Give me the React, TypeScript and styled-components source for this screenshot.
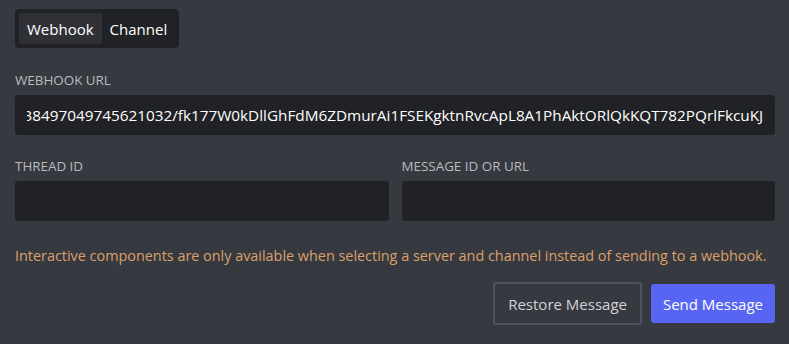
import React, { useEffect, useRef } from 'react';
import styled, { createGlobalStyle } from 'styled-components';

const GlobalStyle = createGlobalStyle`
  html, body {
    margin: 0;
    background: #36393f;
    font-family: "Open Sans", "Noto Sans", sans-serif;
  }
  * { box-sizing: border-box; }
`;

const Page = styled.div`
  padding: 9px 14px 0 15px;
  display: flex;
  flex-direction: column;
`;

const TabBar = styled.div`
  align-self: flex-start;
  display: flex;
  padding: 4px;
  background: #202225;
  border-radius: 4px;
  height: 39px;
`;

const Tab = styled.button<{ $active?: boolean }>`
  border: none;
  font: inherit;
  font-size: 15px;
  color: #ffffff;
  background: ${(p) => (p.$active ? '#2f3136' : 'transparent')};
  border-radius: 3px;
  padding: 0 8px;
  height: 31px;
  cursor: pointer;
`;

const Field = styled.div`
  display: flex;
  flex-direction: column;
  flex: 1;
  min-width: 0;
`;

const Label = styled.label`
  font-size: 13.4px;
  color: #b9bbbe;
  text-transform: uppercase;
  line-height: 18px;
  margin-bottom: 6px;
`;

const Input = styled.input`
  height: 40px;
  width: 100%;
  background: #202225;
  border: none;
  border-radius: 3px;
  color: #ffffff;
  font: inherit;
  font-size: 15.3px;
  padding: 0 12px;
  outline: none;
`;

const Row = styled.div`
  display: flex;
  gap: 13px;
`;

const Section = styled.div<{ $top: number }>`
  margin-top: ${(p) => p.$top}px;
`;

const Warning = styled.p`
  margin: 25px 0 0;
  font-size: 14.4px;
  color: #dca06c;
  line-height: 20px;
`;

const Actions = styled.div`
  display: flex;
  justify-content: flex-end;
  align-items: center;
  gap: 9px;
  margin-top: 16px;
`;

const Button = styled.button<{ $primary?: boolean }>`
  font: inherit;
  font-size: 15px;
  height: ${(p) => (p.$primary ? '39px' : '43px')};
  padding: 0 ${(p) => (p.$primary ? '12px' : '13px')};
  border-radius: 3px;
  cursor: pointer;
  color: ${(p) => (p.$primary ? '#ffffff' : '#d0d2d5')};
  background: ${(p) => (p.$primary ? '#5865f2' : 'transparent')};
  border: ${(p) => (p.$primary ? 'none' : '2px solid #4f545c')};
`;

const WEBHOOK =
  'https://discord.com/api/webhooks/1238497049745621032/fk177W0kDllGhFdM6ZDmurAi1FSEKgktnRvcApL8A1PhAktORlQkKQT782PQrlFkcuKJ';

export default function App() {
  const urlRef = useRef<HTMLInputElement>(null);

  useEffect(() => {
    if (urlRef.current) urlRef.current.scrollLeft = urlRef.current.scrollWidth;
  }, []);

  return (
    <>
      <GlobalStyle />
      <Page>
        <TabBar>
          <Tab $active>Webhook</Tab>
          <Tab>Channel</Tab>
        </TabBar>

        <Section $top={23}>
          <Field>
            <Label>Webhook URL</Label>
            <Input ref={urlRef} defaultValue={WEBHOOK} />
          </Field>
        </Section>

        <Section $top={22}>
          <Row>
            <Field>
              <Label>Thread ID</Label>
              <Input />
            </Field>
            <Field>
              <Label>Message ID or URL</Label>
              <Input />
            </Field>
          </Row>
        </Section>

        <Warning>
          Interactive components are only available when selecting a server and channel instead of sending to a webhook.
        </Warning>

        <Actions>
          <Button>Restore Message</Button>
          <Button $primary>Send Message</Button>
        </Actions>
      </Page>
    </>
  );
}
